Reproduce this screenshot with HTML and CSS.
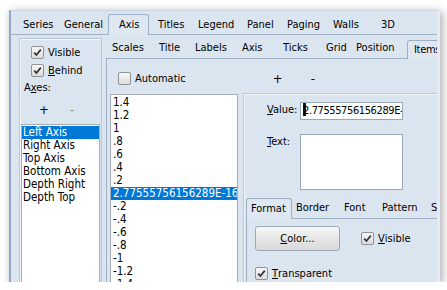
FILE: index.html
```html
<!DOCTYPE html>
<html>
<head>
    <title>Axis Items</title>
    <link rel="stylesheet" href="styles.css">
</head>
<body>

<div class="window">

    <div class="tabs top-tabs">
        <span class="tab">Series</span>
        <span class="tab">General</span>
        <span class="tab active">Axis</span>
        <span class="tab">Titles</span>
        <span class="tab">Legend</span>
        <span class="tab">Panel</span>
        <span class="tab">Paging</span>
        <span class="tab">Walls</span>
        <span class="tab">3D</span>
    </div>

    <div class="panel main-panel">

        <div class="axes-box">
            <div class="check-row">
                <span class="check"><svg viewBox="0 0 11 11"><path d="M2.2 5.6 L4.4 8 L8.8 2.6"/></svg></span>Visible
            </div>
            <div class="check-row">
                <span class="check"><svg viewBox="0 0 11 11"><path d="M2.2 5.6 L4.4 8 L8.8 2.6"/></svg></span><u>B</u>ehind
            </div>
            <div class="caption">A<u>x</u>es:</div>
            <div class="plus-minus">
                <span>+</span>
                <span class="dim">-</span>
            </div>
            <ul class="listbox axes-list">
                <li class="selected">Left Axis</li>
                <li>Right Axis</li>
                <li>Top Axis</li>
                <li>Bottom Axis</li>
                <li>Depth Right</li>
                <li>Depth Top</li>
            </ul>
        </div>

        <div class="axis-area">
            <div class="tabs inner-tabs">
                <span class="tab">Scales</span>
                <span class="tab">Title</span>
                <span class="tab">Labels</span>
                <span class="tab">Axis</span>
                <span class="tab">Ticks</span>
                <span class="tab">Grid</span>
                <span class="tab">Position</span>
                <span class="tab active">Items</span>
            </div>

            <div class="panel items-panel">
                <div class="items-toolbar">
                    <div class="check-row">
                        <span class="check"></span>Automatic
                    </div>
                    <span class="tool add">+</span>
                    <span class="tool remove">-</span>
                </div>

                <div class="items-body">
                    <ul class="listbox values-list">
                        <li>1.4</li>
                        <li>1.2</li>
                        <li>1</li>
                        <li>.8</li>
                        <li>.6</li>
                        <li>.4</li>
                        <li>.2</li>
                        <li class="selected">2.77555756156289E-16</li>
                        <li>-.2</li>
                        <li>-.4</li>
                        <li>-.6</li>
                        <li>-.8</li>
                        <li>-1</li>
                        <li>-1.2</li>
                        <li>-1.4</li>
                    </ul>

                    <div class="item-box">
                        <div class="field">
                            <span class="field-label"><u>V</u>alue:</span>
                            <div class="edit"><span class="caret"></span>2.77555756156289E-16</div>
                        </div>
                        <div class="field">
                            <span class="field-label"><u>T</u>ext:</span>
                            <div class="memo"></div>
                        </div>

                        <div class="tabs format-tabs">
                            <span class="tab active">Format</span>
                            <span class="tab">Border</span>
                            <span class="tab">Font</span>
                            <span class="tab">Pattern</span>
                            <span class="tab">Shadow</span>
                        </div>
                        <div class="panel format-panel">
                            <div class="format-row">
                                <button class="color-button"><u>C</u>olor...</button>
                                <div class="check-row">
                                    <span class="check"><svg viewBox="0 0 11 11"><path d="M2.2 5.6 L4.4 8 L8.8 2.6"/></svg></span><u>V</u>isible
                                </div>
                            </div>
                            <div class="check-row transparent">
                                <span class="check"><svg viewBox="0 0 11 11"><path d="M2.2 5.6 L4.4 8 L8.8 2.6"/></svg></span><u>T</u>ransparent
                            </div>
                        </div>
                    </div>
                </div>
            </div>
        </div>

    </div>
</div>

</body>
</html>
```

FILE: styles.css
```css
body {
  margin: 0;
  padding: 0;
  background-color: #ffffff;
  font-family: "DejaVu Sans Condensed", "DejaVu Sans", sans-serif;
  font-stretch: condensed;
  font-size: 11px;
  color: #000;
}

u {
  text-decoration: underline;
  text-underline-offset: 1px;
}

.window {
  margin: 10px 0 0 9px;
  width: 431px;
  height: 272px;
  box-sizing: border-box;
  background-color: #dbe5ef;
  border-left: 2px solid #8ea8c6;
  border-top: 1px solid #c9d5e1;
  border-right: 3px solid #e4ebf2;
  overflow: hidden;
  box-shadow: 2px 2px 9px rgba(0, 0, 0, 0.35);
}

/* tab strips */
.tabs {
  display: grid;
  align-items: end;
}

.tab {
  height: 20px;
  line-height: 20px;
  white-space: nowrap;
  overflow: hidden;
}

.tab.active {
  justify-self: start;
  box-sizing: border-box;
  height: 21px;
  margin-bottom: -1px;
  border: 1px solid #9db0c4;
  border-bottom: none;
  border-radius: 3px 3px 0 0;
  background-color: #dfe8f1;
  overflow: visible;
}

.top-tabs {
  height: 23px;
  padding-left: 12px;
  grid-template-columns: 41px 54px 40px 40px 49px 40px 46px 48px 40px;
}

.top-tabs .tab {
  line-height: 22px;
}

.top-tabs .tab.active {
  margin-left: -10px;
  padding-left: 10px;
  width: 41px;
  line-height: 19px;
}

.panel {
  border-top: 1px solid #9db0c4;
}

.main-panel {
  display: flex;
  align-items: flex-start;
  height: 260px;
}

/* left axes box */
.axes-box {
  margin: 3px 0 0 8px;
  width: 83px;
  height: 260px;
  box-sizing: border-box;
  border: 1px solid #b9c8d7;
  box-shadow: inset 1px 1px 0 #f2f6fa;
  padding-top: 7px;
}

.check-row {
  display: flex;
  align-items: center;
  height: 13px;
  white-space: nowrap;
}

.check {
  width: 13px;
  height: 13px;
  box-sizing: border-box;
  border: 1px solid #8f9296;
  border-radius: 2px;
  background: linear-gradient(#f7f7f7, #dcdcdc);
  margin-right: 4px;
  flex: none;
}

.check svg {
  display: block;
  width: 11px;
  height: 11px;
}

.check path {
  fill: none;
  stroke: #2f3236;
  stroke-width: 1.7;
}

.axes-box .check-row {
  padding-left: 11px;
  margin-bottom: 5px;
}

.caption {
  padding-left: 4px;
  margin-top: -1px;
  height: 13px;
  line-height: 13px;
}

.plus-minus {
  display: flex;
  height: 16px;
  margin-top: 8px;
  padding-left: 19px;
  line-height: 16px;
  font-size: 13px;
}

.plus-minus span {
  width: 37px;
}

.plus-minus .dim {
  color: #8d8d8d;
}

.listbox {
  list-style: none;
  margin: 0;
  padding: 1px 0 0 0;
  background-color: #fff;
  border: 1px solid #a4adb8;
  box-sizing: border-box;
  overflow: hidden;
  font-size: 11.5px;
}

.listbox li {
  height: 13px;
  line-height: 13px;
  white-space: nowrap;
}

.listbox li.selected {
  background-color: #0078d7;
  color: #fff;
}

.axes-list {
  margin: 6px 0 0 1px;
  width: 79px;
  height: 200px;
}

.axes-list li {
  padding-left: 1px;
}

/* right area */
.axis-area {
  margin-left: 4px;
  flex: 1;
}

.inner-tabs {
  height: 23px;
  padding-left: 6px;
  grid-template-columns: 47px 36px 47px 41px 43px 30px 58px 40px;
}

.inner-tabs .tab {
  line-height: 20px;
}

.inner-tabs .tab.active {
  height: 19px;
  margin-left: -7px;
  padding-left: 6px;
  width: 50px;
  line-height: 17px;
  letter-spacing: -0.3px;
}

.items-panel {
  border-left: 1px solid #9db0c4;
  height: 240px;
}

.items-toolbar {
  display: flex;
  align-items: center;
  height: 35px;
  padding-left: 11px;
  box-sizing: border-box;
  padding-top: 4px;
}

.tool {
  font-size: 13px;
  width: 38px;
}

.tool.add {
  margin-left: 87px;
}

.items-body {
  display: flex;
  align-items: flex-start;
  padding-left: 3px;
}

.values-list {
  width: 128px;
  height: 190px;
}

.values-list li {
  padding-left: 2px;
}

.item-box {
  margin: -1px 0 0 5px;
  flex: 1;
  height: 200px;
  border-top: 1px solid #b9c8d7;
  border-left: 1px solid #b9c8d7;
  box-shadow: inset 1px 1px 0 #f2f6fa;
  padding-top: 8px;
}

.field {
  display: flex;
  padding-left: 23px;
  margin-bottom: 14px;
}

.field-label {
  width: 33px;
  line-height: 15px;
}

.edit {
  width: 103px;
  height: 18px;
  box-sizing: border-box;
  border: 1px solid #9aa7b5;
  background-color: #fff;
  line-height: 16px;
  padding-left: 2px;
  letter-spacing: -0.4px;
  white-space: nowrap;
  overflow: hidden;
}

.caret {
  display: inline-block;
  width: 3px;
  height: 13px;
  margin-right: -3px;
  vertical-align: -2px;
  background-color: #111;
}

.memo {
  width: 103px;
  height: 56px;
  box-sizing: border-box;
  border: 1px solid #9aa7b5;
  background-color: #fff;
}

.format-tabs {
  margin-top: -6px;
  height: 20px;
  padding-left: 7px;
  grid-template-columns: 45px 48px 38px 49px 40px;
}

.format-tabs .tab {
  line-height: 20px;
}

.format-tabs .tab.active {
  height: 21px;
  margin-left: -5px;
  padding-left: 4px;
  width: 46px;
  line-height: 19px;
}

.format-panel {
  margin-left: 2px;
  border-left: 1px solid #9db0c4;
  height: 80px;
  padding: 7px 0 0 8px;
}

.format-row {
  display: flex;
  align-items: center;
}

.color-button {
  width: 85px;
  height: 25px;
  border: 1px solid #9aa8b8;
  border-radius: 3px;
  background: linear-gradient(#f7f7f7, #e6e6e6 50%, #dadada);
  font-family: inherit;
  font-size: 11px;
  color: #000;
  padding: 0;
  margin-right: 21px;
}

.transparent {
  margin-top: 16px;
}
```
